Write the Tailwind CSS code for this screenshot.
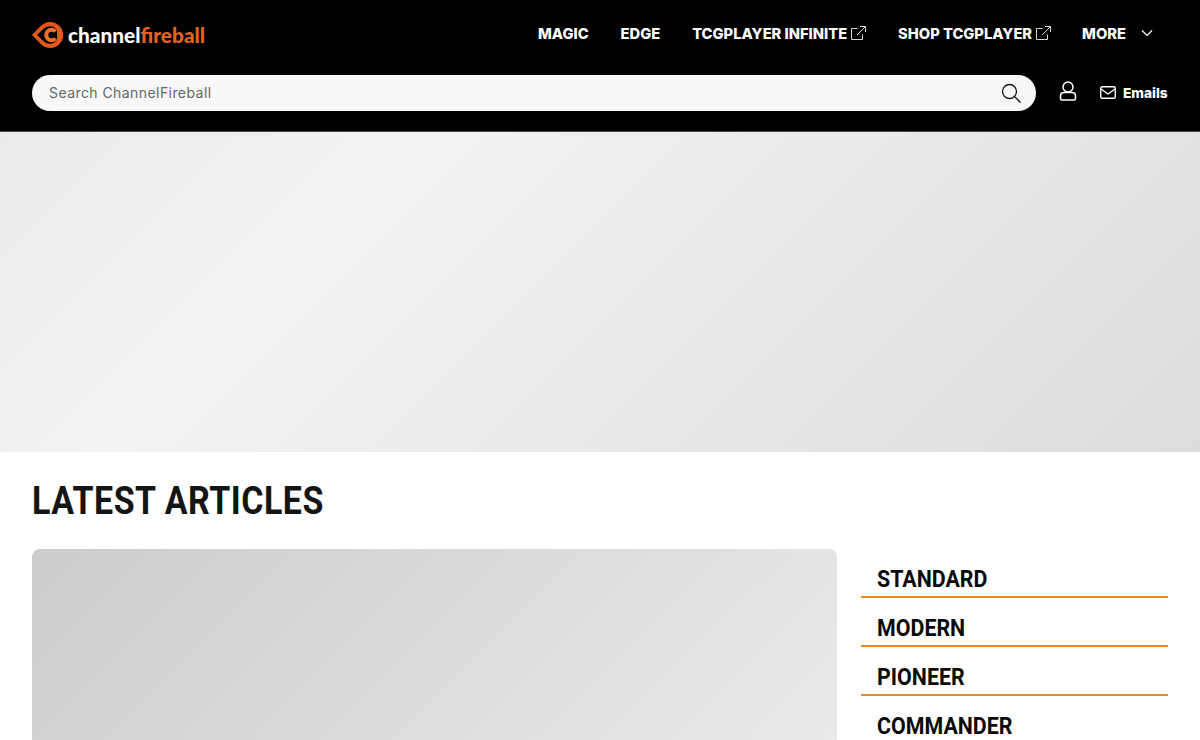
<!DOCTYPE html>
<html lang="en">
<head>
  <meta charset="UTF-8" />
  <title>ChannelFireball</title>
  <script src="https://cdn.jsdelivr.net/npm/@tailwindcss/browser@4"></script>
</head>
<body class="bg-white overflow-hidden h-[740px] font-['Inter',sans-serif]">
  <header class="bg-black h-[132px] px-8 border-b border-[#444]">
    <div class="flex justify-between items-center h-[68px]">
      <a href="#" class="flex items-center gap-[5px] mt-[2px]">
        <svg width="31" height="26" viewBox="0 0 31 26" fill="none">
          <path d="M0 13 L9 3.800 A13 13 0 1 1 9 22.200 Z" fill="#e2591b"/>
          <path d="M5 13 L11 7.300 A9 9 0 0 1 25 8 L25 18 A9 9 0 0 1 11 18.700 Z" fill="#000"/>
          <path d="M23.500 9.500 A5.300 5.300 0 1 0 23.500 16.500" stroke="#f0702a" stroke-width="4" fill="none"/>
        </svg>
        <span class="text-[20.8px] leading-none font-black font-['Lato',sans-serif] text-white">channel<span class="text-[#e2651f]">fireball</span></span>
      </a>
      <nav class="flex items-center text-white text-[14.7px] font-extrabold mr-[15px]">
        <a href="#" class="mr-8">MAGIC</a>
        <a href="#" class="mr-8">EDGE</a>
        <a href="#" class="flex items-center gap-1 mr-8">TCGPLAYER INFINITE
          <svg width="15" height="15" viewBox="0 0 15 15" fill="none" stroke="#d8d8d8" stroke-width="1"><path d="M11.500 8.500v5h-11v-11h6M9 .5h5.500V6M14.500 .5 6 9"/></svg>
        </a>
        <a href="#" class="flex items-center gap-1 mr-[31px]">SHOP TCGPLAYER
          <svg width="15" height="15" viewBox="0 0 15 15" fill="none" stroke="#d8d8d8" stroke-width="1"><path d="M11.500 8.500v5h-11v-11h6M9 .5h5.500V6M14.500 .5 6 9"/></svg>
        </a>
        <a href="#" class="flex items-center gap-[15px]">MORE
          <svg width="12" height="8" viewBox="0 0 12 8" fill="none" stroke="#fff" stroke-width="1.200" class="-mt-[2px]"><path d="M1 1.500l5 5 5-5"/></svg>
        </a>
      </nav>
    </div>
    <div class="flex items-center mt-[7px]">
      <div class="flex items-center justify-between w-[1004px] h-9 rounded-full bg-[#f8f8f8] pl-[17px] pr-[15px]">
        <span class="text-[14px] text-[#666] tracking-[0.43px] -mt-px">Search ChannelFireball</span>
        <svg width="20" height="20" viewBox="0 0 20 20" fill="none" stroke="#111" stroke-width="1.300"><circle cx="8.500" cy="8.500" r="7"/><path d="M13.600 13.600 19.500 19.500"/></svg>
      </div>
      <svg class="ml-[23px] -mt-[5px]" width="18" height="20" viewBox="0 0 18 20" fill="none" stroke="#fff" stroke-width="1.500"><circle cx="9" cy="6" r="5"/><path d="M3 19h12a1.500 1.500 0 0 0 1.500-1.500V15c0-2-1.500-3.500-3.500-3.500H5C3 11.500 1.500 13 1.500 15v2.500A1.500 1.500 0 0 0 3 19z"/></svg>
      <a href="#" class="flex items-center gap-[7px] ml-[23px] text-white text-[13.7px] font-extrabold">
        <svg width="16" height="13" viewBox="0 0 16 13" fill="none" stroke="#fff" stroke-width="1.400"><rect x=".7" y=".7" width="14.600" height="11.600" rx="1.500"/><path d="M1 3l7 5 7-5"/></svg>
        Emails
      </a>
    </div>
  </header>

  <div class="h-[320px] bg-linear-[135deg] from-[#ebebeb] via-[#f3f3f3] via-[28%] to-[#dcdcdc]"></div>

  <main class="px-8">
    <h1 class="mt-[26px] text-[39px] leading-[46px] font-bold text-[#141414] font-['Roboto',sans-serif] tracking-[0.6px] origin-left scale-x-[0.87]">LATEST ARTICLES</h1>
    <div class="flex gap-6 mt-[25px]">
      <div class="w-[805px] h-[400px] rounded-lg bg-linear-[135deg] from-[#cccccc] to-[#f0f0f0]"></div>
      <aside class="flex-1 font-['Roboto',sans-serif]">
        <a href="#" class="block h-[49px] pl-4 pt-[17px] text-[23px] leading-[27px] font-bold text-[#0a0a0a] border-b-2 border-[#e88a1d]"><span class="inline-block origin-left scale-x-[0.93]">STANDARD</span></a>
        <a href="#" class="block h-[49px] pl-4 pt-[17px] text-[23px] leading-[27px] font-bold text-[#0a0a0a] border-b-2 border-[#e88a1d]"><span class="inline-block origin-left scale-x-[0.93]">MODERN</span></a>
        <a href="#" class="block h-[49px] pl-4 pt-[17px] text-[23px] leading-[27px] font-bold text-[#0a0a0a] border-b-2 border-[#e88a1d]"><span class="inline-block origin-left scale-x-[0.93]">PIONEER</span></a>
        <a href="#" class="block h-[49px] pl-4 pt-[17px] text-[23px] leading-[27px] font-bold text-[#0a0a0a] border-b-2 border-[#e88a1d]"><span class="inline-block origin-left scale-x-[0.93]">COMMANDER</span></a>
      </aside>
    </div>
  </main>
</body>
</html>
